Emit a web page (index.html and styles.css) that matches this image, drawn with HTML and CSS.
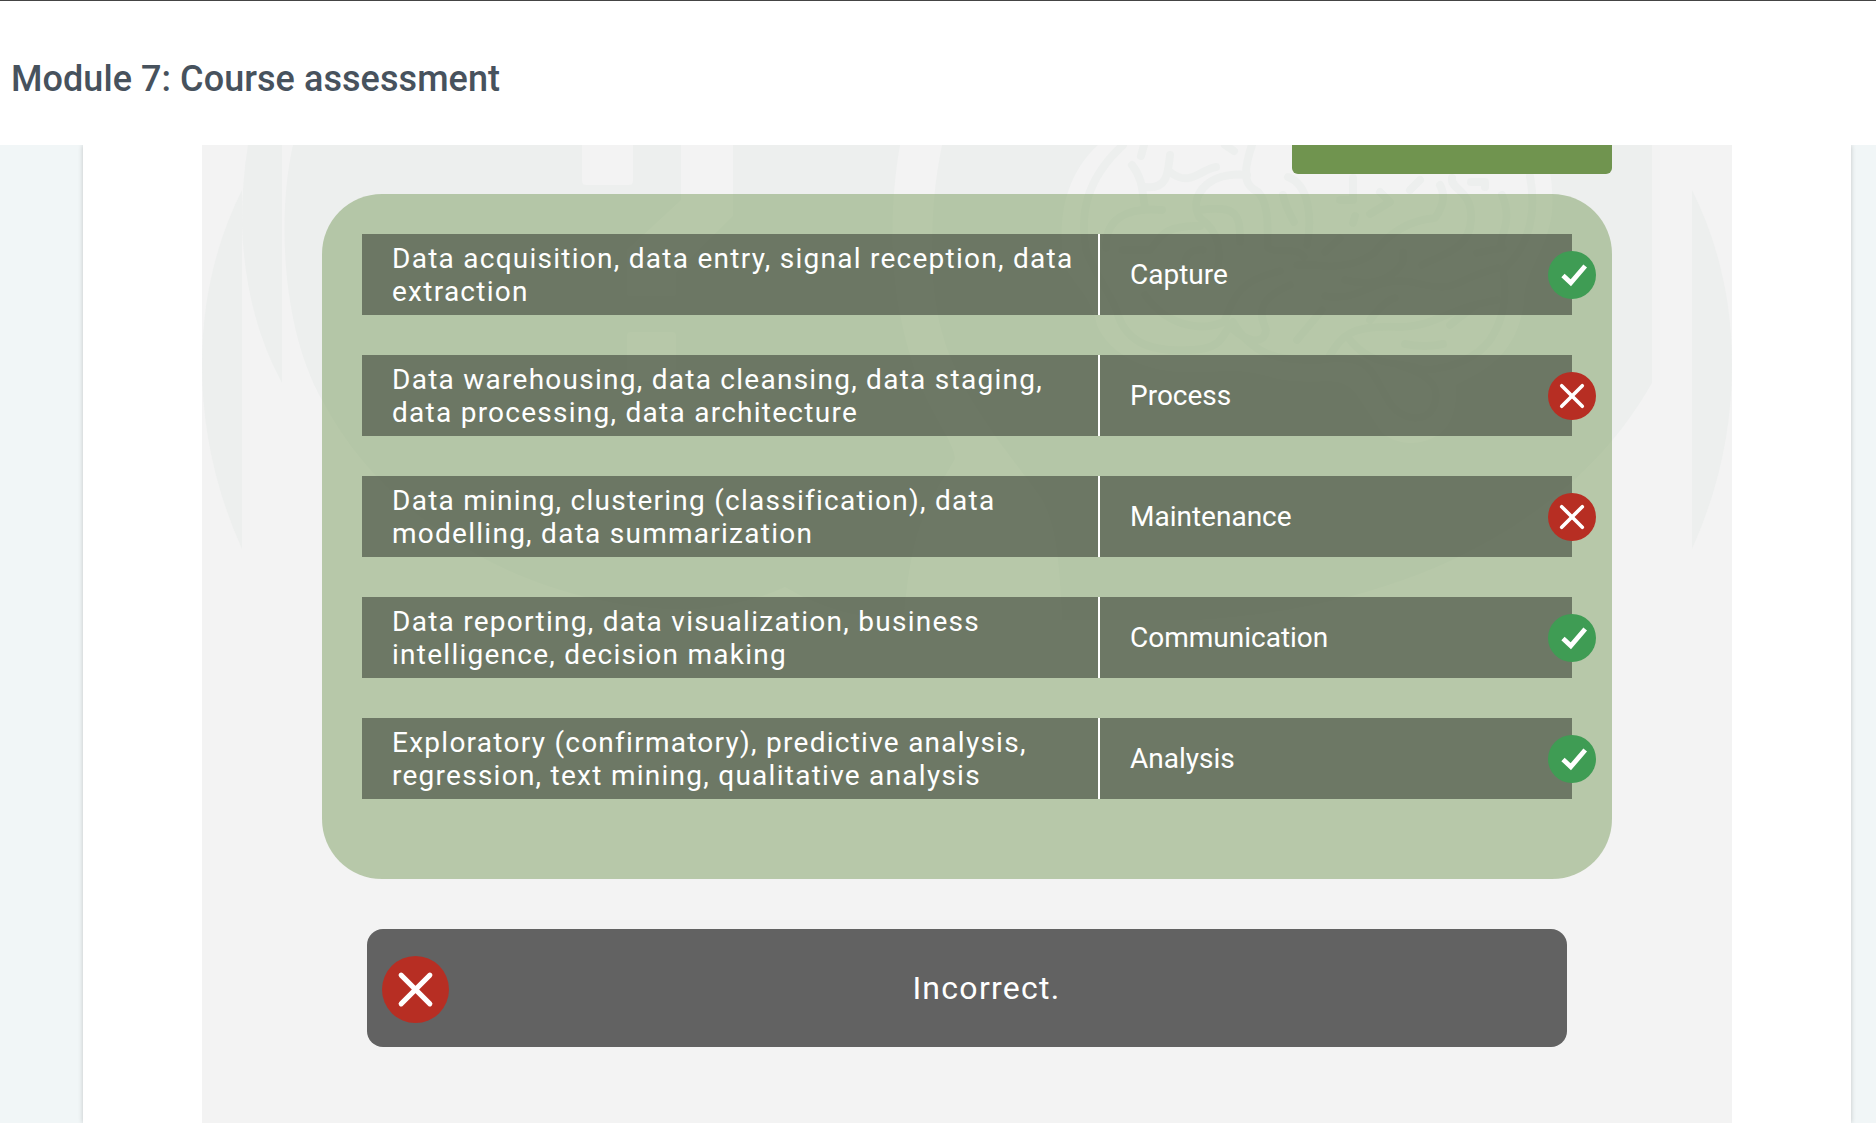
FILE: index.html
```
<!DOCTYPE html>
<html lang="en">
<head>
<meta charset="utf-8">
<title>Module 7: Course assessment</title>
<link rel="stylesheet" href="styles.css">
</head>
<body>
<svg class="defs" width="0" height="0" aria-hidden="true">
  <symbol id="right" viewBox="0 0 48 48">
    <circle cx="24" cy="24" r="24" fill="#3f9c54"/>
    <path d="M15 24.4 22.8 31.8 37.2 15" fill="none" stroke="#fff" stroke-width="4.8"/>
  </symbol>
  <symbol id="wrong" viewBox="0 0 48 48">
    <circle cx="24" cy="24" r="24" fill="#b72e23"/>
    <path d="M13.7 13.7 34.3 34.3M34.3 13.7 13.7 34.3" fill="none" stroke="#fff" stroke-width="3.6" stroke-linecap="round"/>
  </symbol>
</svg>
<header class="header"><h1 class="title">Module 7: Course assessment</h1></header>
<div class="viewport">
  <main class="card">
    <section class="slide">
      <svg class="art" viewBox="202 145 1530 978" aria-hidden="true">
        <g fill="#edefee">
          <path d="M242 190Q202 270 202 365Q202 460 242 549Z"/>
          <path d="M248 145Q242 180 242 225Q245 315 282 383V145Z"/>
          <path d="M293 145C278 210 280 325 322 400C390 530 540 610 690 610Q745 606 785 587Q840 620 904 620H1200C1370 610 1560 545 1652 383V145Z"/>
          <path d="M1692 190Q1732 270 1732 365Q1732 460 1692 549Z"/>
        </g>
        <g fill="#f3f3f3">
          <path d="M582 145H633V181Q633 185 629 185H586Q582 185 582 181Z"/>
          <path d="M681 145H733V216L676 272V292Q676 296 672 296H631Q627 296 627 292V250L681 200Z"/>
          <rect x="627" y="332" width="49" height="49" rx="4"/>
          <path d="M900 145C887 220 888 320 930 405C943 430 955 448 955 459C935 495 910 520 904 622H1062C1060 575 1058 530 1042 500C990 425 930 370 932 250C932 210 935 180 942 145Z"/>
          <path d="M1098 145C1060 180 1058 230 1065 265C1070 280 1092 295 1097 325C1110 355 1145 372 1190 372C1230 372 1238 367 1275 378C1320 388 1340 370 1358 396L1382 432C1400 450 1440 446 1451 418Q1458 400 1455 385C1485 370 1518 355 1524 300C1522 275 1550 245 1552 210C1554 180 1548 160 1540 145Z"/>
        </g>
        <g class="folds">
          <path d="M1123 145C1085 180 1080 215 1086 250C1092 270 1115 300 1118 315C1128 345 1155 352 1190 350C1225 350 1222 332 1233 322C1255 360 1285 360 1320 360C1370 353 1370 370 1387 398C1400 425 1436 425 1436 395C1435 375 1410 370 1399 365"/>
          <path d="M1530 176C1538 220 1525 250 1503 270Q1510 310 1490 340C1475 360 1450 368 1425 370"/>
          <path d="M1132 165C1144 180 1142 195 1145 207M1162 210C1125 207 1105 220 1106 248M1145 187C1168 190 1168 172 1170 155M1170 172C1190 188 1201 169 1216 167M1252 145C1240 180 1248 187 1258 192C1270 205 1267 230 1268 248C1280 255 1295 245 1304 257"/>
          <path d="M1247 175C1208 170 1187 198 1200 218C1220 232 1223 255 1215 275M1200 210C1238 205 1240 215 1240 242M1200 226C1160 225 1160 240 1150 250H1122M1203 250C1183 247 1180 270 1192 276"/>
          <path d="M1145 295C1170 330 1205 330 1224 322C1235 295 1240 280 1280 271M1290 285C1255 300 1260 315 1266 330C1264 347 1245 340 1234 330M1283 195C1285 205 1288 211 1294 222M1288 177C1310 185 1312 220 1307 245M1297 265H1315Q1350 270 1374 253C1390 232 1410 220 1435 218Q1448 200 1440 185"/>
          <path d="M1325 296C1360 303 1375 275 1412 282C1460 295 1450 280 1498 268M1497 300C1440 310 1442 325 1400 327C1350 325 1343 335 1330 355M1350 340C1375 370 1400 360 1424 370M1452 178C1450 190 1473 190 1471 220C1470 250 1440 255 1422 265M1502 195C1515 225 1495 240 1503 248Q1490 250 1477 253M1450 325Q1465 313 1478 304M1405 344Q1425 348 1443 344M1370 320Q1385 300 1395 298M1322 310 1297 340M1345 280Q1385 290 1403 262V252"/>
          <path d="M1353 178V200L1340 200M1380 192 1390 202 1370 214M1355 216 1353 223M1410 190 1420 180M1471 182H1485V187M1340 238 1325 252M1144 145 1141 156M1225 145 1234 151"/>
        </g>
      </svg>
      <div class="action"></div>
      <div class="panel">
        <div class="row"><div class="desc">Data acquisition, data entry, signal reception, data<br>extraction</div><div class="term">Capture</div><svg class="mark"><use href="#right"/></svg></div>
        <div class="row"><div class="desc">Data warehousing, data cleansing, data staging,<br>data processing, data architecture</div><div class="term">Process</div><svg class="mark"><use href="#wrong"/></svg></div>
        <div class="row"><div class="desc">Data mining, clustering (classification), data<br>modelling, data summarization</div><div class="term">Maintenance</div><svg class="mark"><use href="#wrong"/></svg></div>
        <div class="row"><div class="desc">Data reporting, data visualization, business<br>intelligence, decision making</div><div class="term">Communication</div><svg class="mark"><use href="#right"/></svg></div>
        <div class="row"><div class="desc">Exploratory (confirmatory), predictive analysis,<br>regression, text mining, qualitative analysis</div><div class="term">Analysis</div><svg class="mark"><use href="#right"/></svg></div>
      </div>
      <div class="feedback"><svg class="result"><use href="#wrong"/></svg><p class="message">Incorrect.</p></div>
    </section>
  </main>
</div>
</body>
</html>
```
FILE: styles.css
```
* { box-sizing: border-box; }
body {
  margin: 0;
  height: 1123px;
  display: flex;
  flex-direction: column;
  overflow: hidden;
  font-family: Roboto, "Liberation Sans", sans-serif;
  background: #fff;
}
.defs { position: absolute; }
.header {
  flex: 0 0 145px;
  border-top: 1px solid #444;
  padding: 57px 0 0 11px;
}
.title {
  margin: 0;
  font-size: 36px;
  line-height: 42px;
  font-weight: 500;
  letter-spacing: .06px;
  color: #47525d;
  white-space: nowrap;
}
.viewport {
  flex: 1;
  min-height: 0;
  overflow: hidden;
  display: flex;
  background: #f1f6f7;
  padding: 0 25px 0 83px;
}
.card {
  flex: 1;
  display: flex;
  justify-content: center;
  background: #fff;
  box-shadow: 0 0 5px rgba(0, 0, 0, .2);
}
.slide {
  position: relative;
  width: 1530px;
  background: #f3f3f3;
  display: flex;
  flex-direction: column;
  align-items: center;
}
.art { position: absolute; inset: 0; width: 1530px; height: 978px; }
.folds {
  fill: none;
  stroke: #edefee;
  stroke-width: 8;
  stroke-linecap: round;
  stroke-linejoin: round;
}
.action {
  position: relative;
  align-self: flex-end;
  width: 320px;
  height: 29px;
  margin-right: 120px;
  border-radius: 0 0 6px 6px;
  background: #70944f;
}
.panel {
  position: relative;
  width: 1290px;
  height: 685px;
  margin-top: 20px;
  padding: 40px;
  border-radius: 60px;
  background: rgba(110, 149, 80, .45);
  display: flex;
  flex-direction: column;
  gap: 40px;
}
.row {
  position: relative;
  width: 1210px;
  height: 81px;
  display: flex;
  align-items: center;
  background: rgba(50, 55, 46, .55);
  color: #fff;
  font-size: 28px;
}
.desc {
  width: 738px;
  height: 81px;
  padding: 8px 0 0 30px;
  border-right: 2px solid #fff;
  line-height: 33px;
  letter-spacing: 1.26px;
  white-space: nowrap;
}
.term { padding-left: 30px; }
.mark { position: absolute; right: -24px; top: 17px; width: 48px; height: 48px; }
.feedback {
  position: relative;
  width: 1200px;
  height: 118px;
  margin-top: 50px;
  padding-left: 15px;
  display: flex;
  align-items: center;
  border-radius: 16px;
  background: #626262;
}
.result { width: 67px; height: 67px; margin-top: 2px; }
.message {
  flex: 1;
  margin: 0 0 0 -43px;
  text-align: center;
  color: #fff;
  font-size: 32px;
  letter-spacing: 1.28px;
}
```
